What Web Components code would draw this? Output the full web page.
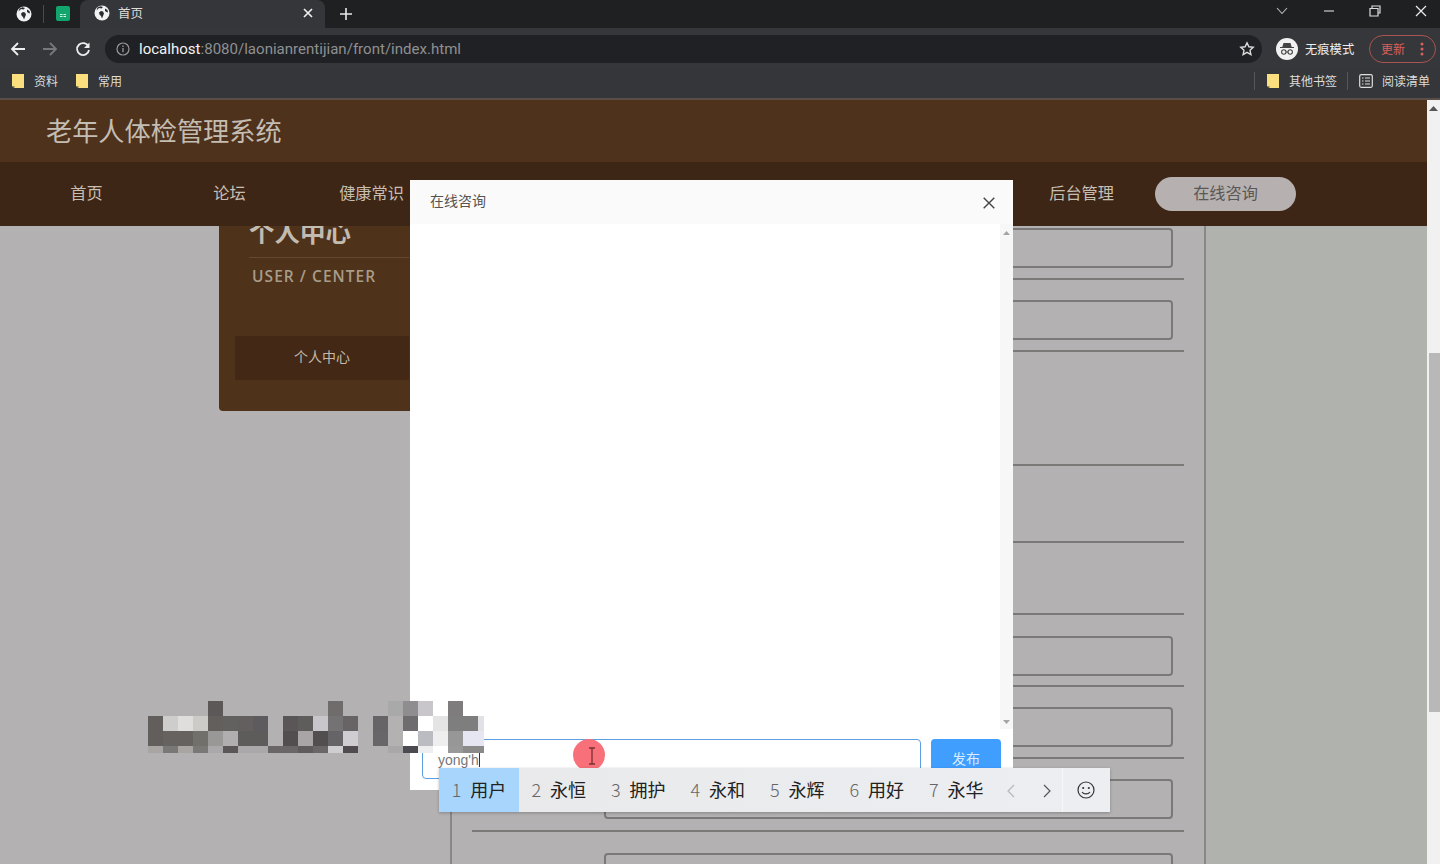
<!DOCTYPE html>
<html lang="zh">
<head>
<meta charset="utf-8">
<title>首页</title>
<style>
  html, body { margin: 0; padding: 0; height: 864px; overflow: hidden; background: #b3b0af; }
  body { font-family: "Liberation Sans", "Noto Sans CJK SC", sans-serif; position: relative; }
  #app { display: flex; height: 764px; }
  #page { width: 1427px; display: flex; flex-direction: column; }
</style>
</head>
<body>
<browser-chrome></browser-chrome>
<div id="app">
  <div id="page">
    <site-header title="老年人体检管理系统"></site-header>
    <site-nav></site-nav>
    <center-view></center-view>
  </div>
  <page-scrollbar></page-scrollbar>
</div>
<chat-dialog></chat-dialog>
<mosaic-block></mosaic-block>
<click-spot></click-spot>
<ime-bar></ime-bar>

<script>
const GLOBE = `<svg width="16" height="16" viewBox="0 0 16 16"><circle cx="8" cy="8" r="7.5" fill="#f2f2f2"/><path d="M2.5 5.5 5 3l2.5.5L9 2 6.5 1.2 3.5 2.5zM7 6l2 .5 1 2-1 2.5-1 2.5-1-2.5-1.5-1.5-.5-2zM11 3.5l2.5 1.5.5 2.5-1.5-.5-1.5-1z" fill="#2b2c2f"/></svg>`
const FOLDER = `<svg width="12" height="14" viewBox="0 0 12 14"><path d="M0 0h12v14H2.5L0 12z" fill="#fbdf7f"/><path d="M0 12h2.5v2z" fill="#8f8460"/></svg>`

class BrowserChrome extends HTMLElement {
  constructor() {
    super()
    this.attachShadow({ mode: 'open' })
  }
  connectedCallback() {
    this.shadowRoot.innerHTML = `
      <div class="strip">
        <span class="pin">${GLOBE}</span>
        <i class="sep"></i>
        <span class="pin sheet"><svg width="14" height="15" viewBox="0 0 14 15"><rect width="14" height="15" rx="2" fill="#12a56e"/><path d="M4 8h2.5v1H4zM7.5 8H10v1H7.5zM4 10h2.5v1H4zM7.5 10H10v1H7.5z" fill="#d8f5e6"/></svg></span>
        <div class="tab">
          ${GLOBE}
          <span class="tab-title">首页</span>
          <svg class="tab-x" width="10" height="10" viewBox="0 0 10 10"><path d="M1 1l8 8M9 1l-8 8" stroke="#eee" stroke-width="1.7"/></svg>
        </div>
        <svg class="plus" width="14" height="14" viewBox="0 0 14 14"><path d="M7 1v12M1 7h12" stroke="#e8e8e8" stroke-width="1.6"/></svg>
        <div class="win">
          <svg width="12" height="8" viewBox="0 0 12 8" style="margin-right:35px"><path d="M1 1l5 5.5L11 1" fill="none" stroke="#bbb" stroke-width="1.1"/></svg>
          <svg width="12" height="2" viewBox="0 0 12 2" style="margin-right:34px"><path d="M1 1h10" stroke="#ccc" stroke-width="1.2"/></svg>
          <svg width="12" height="12" viewBox="0 0 12 12" style="margin-right:34px"><path d="M3 3V1h8v7H9M1 3.5h8v7.5H1z" fill="none" stroke="#ddd" stroke-width="1.2"/></svg>
          <svg width="12" height="12" viewBox="0 0 12 12"><path d="M1 1l10 10M11 1L1 11" stroke="#eee" stroke-width="1.2"/></svg>
        </div>
      </div>
      <div class="tools">
        <svg class="ic" style="margin-left:10px" width="16" height="16" viewBox="0 0 16 16"><path d="M15 8H2M8 2 2 8l6 6" fill="none" stroke="#eee" stroke-width="1.8"/></svg>
        <svg class="ic" style="margin-left:16px" width="16" height="16" viewBox="0 0 16 16"><path d="M1 8h13M8 2l6 6-6 6" fill="none" stroke="#77787a" stroke-width="1.8"/></svg>
        <svg class="ic" style="margin-left:17px" width="16" height="16" viewBox="0 0 16 16"><path d="M13.5 5.5A6 6 0 1 0 14 9" fill="none" stroke="#eee" stroke-width="1.8"/><path d="M14.5 1.5V7H9z" fill="#eee"/></svg>
        <div class="url">
          <svg width="14" height="14" viewBox="0 0 14 14"><circle cx="7" cy="7" r="6" fill="none" stroke="#999" stroke-width="1.2"/><path d="M7 6v4.2M7 3.6v1.3" stroke="#999" stroke-width="1.3"/></svg>
          <span class="addr"><b>localhost</b>:8080/laonianrentijian/front/index.html</span>
          <svg class="star" width="16" height="16" viewBox="0 0 16 16"><path d="M8 1.8l1.9 4 4.3.5-3.2 3 .9 4.3L8 11.4l-3.9 2.2.9-4.3-3.2-3 4.3-.5z" fill="none" stroke="#ddd" stroke-width="1.4"/></svg>
        </div>
        <div class="incog">
          <svg width="22" height="22" viewBox="0 0 22 22"><circle cx="11" cy="11" r="11" fill="#f1f1f1"/><path d="M7.5 5h7l1.2 4H18v1H4V9h2.300z" fill="#444"/><circle cx="7.800" cy="14" r="2.200" fill="none" stroke="#444" stroke-width="1.100"/><circle cx="14.200" cy="14" r="2.200" fill="none" stroke="#444" stroke-width="1.100"/><path d="M10 14h2" stroke="#444"/></svg>
          <span>无痕模式</span>
        </div>
        <div class="update">
          <span>更新</span>
          <svg width="4" height="14" viewBox="0 0 4 14"><circle cx="2" cy="2" r="1.500" fill="#d9605c"/><circle cx="2" cy="7" r="1.500" fill="#d9605c"/><circle cx="2" cy="12" r="1.500" fill="#d9605c"/></svg>
        </div>
      </div>
      <div class="marks">
        ${FOLDER}<span class="mk" style="margin:0 18px 1px 10px">资料</span>
        ${FOLDER}<span class="mk" style="margin-left:10px">常用</span>
        <i class="bar" style="margin-left:auto"></i>
        <span style="margin-left:12px;display:flex">${FOLDER}</span><span class="mk" style="margin-left:10px">其他书签</span>
        <i class="bar" style="margin-left:10px"></i>
        <svg style="margin-left:11px" width="14" height="14" viewBox="0 0 14 14"><rect x=".7" y=".7" width="12.600" height="12.600" rx="1.500" fill="none" stroke="#ddd" stroke-width="1.200"/><path d="M3 4h1.500M6 4h5M3 7h1.500M6 7h5M3 10h1.500M6 10h5" stroke="#ddd" stroke-width="1.100"/></svg>
        <span class="mk" style="margin-left:9px">阅读清单</span>
      </div>
      <style>
        :host {
          display: block;
          height: 100px;
          color: #e4e4e4;
          font-family: "Noto Sans CJK SC", sans-serif;
        }
        .strip { height: 28px; background: #1f2022; display: flex; align-items: center; padding-left: 16px; }
        .pin { display: flex; margin-top: -1px; }
        .sep { width: 1px; height: 18px; background: #4a4b4d; margin: 0 12px 0 11px; }
        .sheet { margin-right: 10px; }
        .tab {
          width: 245px; height: 28px; box-sizing: border-box;
          background: #35363a; border-radius: 8px 8px 0 0;
          display: flex; align-items: center; padding: 0 0 2px 14px;
        }
        .tab-title { font-size: 12.500px; margin: 0 0 2px 8px; color: #ddd; }
        .tab-x { margin-left: auto; margin-right: 12px; }
        .plus { margin-left: 14px; margin-top: -1px; }
        .win { margin-left: auto; display: flex; align-items: center; padding-right: 13px; margin-top: -7px; }
        .tools { height: 40px; background: #36373a; display: flex; align-items: center; padding-top: 1px; box-sizing: border-box; }
        .ic { flex: none; }
        .url {
          margin-left: 14px; width: 1157px; height: 28px; box-sizing: border-box;
          background: #202124; border-radius: 14px;
          display: flex; align-items: center; padding: 0 7px 0 11px;
        }
        .addr { margin-left: 9px; font: 15.050px Roboto, sans-serif; color: #8f9092; }
        .addr b { font-weight: 400; color: #f4f4f4; }
        .star { margin-left: auto; }
        .incog {
          margin-left: 14px; height: 26px; width: 86px; display: flex; align-items: center;
          gap: 7px; font-size: 12.300px; color: #eee; white-space: nowrap;
        }
        .update {
          margin-left: 7px; width: 67px; height: 28px; box-sizing: border-box;
          border: 1.500px solid #a85450; border-radius: 14px;
          display: flex; align-items: center; padding: 0 11px 0 11px;
          justify-content: space-between; color: #d9605c; font-size: 12px;
        }
        .marks {
          height: 32px; box-sizing: border-box; background: #353639;
          display: flex; align-items: center; padding: 0 10px 5px 12px;
          border-bottom: 2px solid #5a4f48;
        }
        .mk { font-size: 12px; color: #dcdcdc; white-space: nowrap; margin-bottom: 1px; }
        .bar { width: 1px; height: 18px; background: #55565a; }
      </style>
    `
  }
}

class SiteHeader extends HTMLElement {
  constructor() {
    super()
    this.attachShadow({ mode: 'open' })
  }
  connectedCallback() {
    this.shadowRoot.innerHTML = `
      <span>${this.getAttribute('title')}</span>
      <style>
        :host {
          display: flex;
          align-items: center;
          height: 62px;
          box-sizing: border-box;
          padding: 0 0 3px 46px;
          background: #4f321c;
          color: #c4bdb3;
          font-size: 26.200px;
          font-family: "Noto Sans CJK SC", sans-serif;
        }
      </style>
    `
  }
}

class SiteNav extends HTMLElement {
  constructor() {
    super()
    this.attachShadow({ mode: 'open' })
  }
  connectedCallback() {
    this.shadowRoot.innerHTML = `
      <a>首页</a><a>论坛</a><a class="third">健康常识</a>
      <a class="end">后台管理</a>
      <a class="pill">在线咨询</a>
      <style>
        :host {
          display: flex;
          align-items: center;
          height: 64px;
          padding: 0 131px 0 15px;
          background: #3d2615;
          color: #c8bfb3;
          font-size: 16.200px;
          font-family: "Noto Sans CJK SC", sans-serif;
        }
        a { width: 143px; text-align: center; flex: none; margin-bottom: 4px; }
        .third { width: 141px; }
        .end { margin-left: auto; width: auto; margin-right: 41px; }
        .pill {
          width: 141px; height: 34px; line-height: 30px; margin-bottom: 0;
          background: #b6b1b0; border-radius: 17px; color: #5a5855;
        }
      </style>
    `
  }
}

class CenterView extends HTMLElement {
  constructor() {
    super()
    this.attachShadow({ mode: 'open' })
  }
  connectedCallback() {
    this.shadowRoot.innerHTML = `
      <user-card></user-card>
      <form-panel>
        <form-row h="54" top="2" input></form-row>
        <form-row h="72" top="20" input></form-row>
        <form-row h="114"></form-row>
        <form-row h="77"></form-row>
        <form-row h="72"></form-row>
        <form-row h="72" input></form-row>
        <form-row h="72" top="20" input></form-row>
        <form-row h="73" top="20" input></form-row>
        <form-row h="72" input></form-row>
      </form-panel>
      <style>
        :host {
          display: flex;
          align-items: flex-start;
          flex: 1;
          min-height: 0;
          overflow: hidden;
          padding-left: 219px;
          gap: 25px;
          background: linear-gradient(90deg, #b4b1b2 0, #b4b1b2 1206px, #b0b2ae 1206px);
        }
      </style>
    `
  }
}

class UserCard extends HTMLElement {
  constructor() {
    super()
    this.attachShadow({ mode: 'open' })
  }
  connectedCallback() {
    this.shadowRoot.innerHTML = `
      <div class="cn">个人中心</div>
      <div class="en">USER / CENTER</div>
      <div class="btn">个人中心</div>
      <style>
        :host {
          display: block;
          flex: none;
          width: 206px;
          height: 185px;
          box-sizing: border-box;
          padding: 0 16px;
          background: #4e3219;
          border-radius: 0 0 4px 4px;
          font-family: "Noto Sans CJK SC", sans-serif;
        }
        .cn {
          margin: -14px 0 0 14px;
          height: 45px;
          line-height: 38px;
          font-size: 25.500px;
          font-weight: 700;
          color: #c2bbb1;
          border-bottom: 1px solid #62492f;
        }
        .en {
          margin-top: 8px;
          padding-left: 17px;
          font: 600 15.500px/20px "Open Sans", "Liberation Sans", sans-serif;
          letter-spacing: 1.050px;
          white-space: nowrap;
          color: #a89c8b;
        }
        .btn {
          margin-top: 50px;
          height: 44px;
          line-height: 41px;
          text-align: center;
          background: #432815;
          color: #c2b9ac;
          font-size: 14px;
        }
      </style>
    `
  }
}

class FormPanel extends HTMLElement {
  constructor() {
    super()
    this.attachShadow({ mode: 'open' })
  }
  connectedCallback() {
    this.shadowRoot.innerHTML = `
      <slot></slot>
      <style>
        :host {
          display: block;
          flex: none;
          width: 756px;
          height: 900px;
          box-sizing: border-box;
          padding: 0 20px;
          border-left: 2px solid #8a8886;
          border-right: 2px solid #8a8886;
        }
      </style>
    `
  }
}

class FormRow extends HTMLElement {
  constructor() {
    super()
    this.attachShadow({ mode: 'open' })
  }
  connectedCallback() {
    const h = this.getAttribute('h')
    const hasInput = this.hasAttribute('input')
    const top = this.getAttribute('top') || 21
    this.shadowRoot.innerHTML = `
      ${hasInput ? '<div class="inp"></div>' : ''}
      <style>
        :host {
          display: block;
          height: ${h}px;
          box-sizing: border-box;
          padding-top: ${top}px;
          border-bottom: 2px solid #7b7977;
        }
        .inp {
          margin: 0 11px 0 132px;
          height: 40px;
          box-sizing: border-box;
          border: 2px solid #7b7977;
          border-radius: 4px;
        }
      </style>
    `
  }
}

class PageScrollbar extends HTMLElement {
  constructor() {
    super()
    this.attachShadow({ mode: 'open' })
  }
  connectedCallback() {
    this.shadowRoot.innerHTML = `
      <svg class="up" width="9" height="5" viewBox="0 0 9 5"><path d="M4.500 0 9 5H0z" fill="#555"/></svg>
      <div class="thumb"></div>
      <style>
        :host {
          display: flex;
          flex-direction: column;
          align-items: center;
          width: 13px;
          background: #f1f1f1;
        }
        .up { margin-top: 6px; }
        .thumb { margin-top: 242px; width: 11px; height: 359px; background: #b8b8b8; align-self: flex-end; }
      </style>
    `
  }
}

class ChatDialog extends HTMLElement {
  constructor() {
    super()
    this.attachShadow({ mode: 'open' })
  }
  connectedCallback() {
    this.shadowRoot.innerHTML = `
      <div class="head">
        <span>在线咨询</span>
        <svg width="12" height="12" viewBox="0 0 12 12"><path d="M.7.7l10.600 10.600M11.300.7.7 11.300" stroke="#444" stroke-width="1.400"/></svg>
      </div>
      <div class="log">
        <div class="msgs"></div>
        <div class="track">
          <svg width="7" height="4" viewBox="0 0 7 4"><path d="M3.500 0 7 4H0z" fill="#a5a5a5"/></svg>
          <svg width="7" height="4" viewBox="0 0 7 4"><path d="M3.500 4 7 0H0z" fill="#a5a5a5"/></svg>
        </div>
      </div>
      <div class="foot">
        <div class="field">yong'h<i class="caret"></i></div>
        <div class="send">发布</div>
      </div>
      <style>
        :host {
          position: absolute;
          left: 410px;
          top: 180px;
          width: 603px;
          height: 610px;
          display: flex;
          flex-direction: column;
          background: #fff;
          font-family: "Noto Sans CJK SC", sans-serif;
        }
        .head {
          height: 44px;
          flex: none;
          display: flex;
          align-items: center;
          justify-content: space-between;
          padding: 0 18px 0 20px;
          background: #fbfafa;
          color: #55534f;
          font-size: 14px;
        }
        .head span { margin-bottom: 4px; }
        .head svg { margin-top: 1px; }
        .log { height: 505px; flex: none; display: flex; }
        .msgs { flex: 1; }
        .track {
          width: 13px;
          padding: 7px 0 5px;
          box-sizing: border-box;
          display: flex;
          flex-direction: column;
          justify-content: space-between;
          align-items: center;
          background: #f7f7f7;
        }
        .foot { display: flex; gap: 10px; padding: 10px 12px 0; }
        .field {
          width: 499px;
          height: 40px;
          box-sizing: border-box;
          border: 1px solid #5ba0e0;
          border-radius: 4px;
          padding: 11px 15px 0;
          color: #777;
          font: 14px/18px "Liberation Sans", sans-serif;
        }
        .caret { display: inline-block; width: 1px; height: 14px; background: #333; vertical-align: -2px; }
        .send {
          width: 70px;
          height: 40px;
          box-sizing: border-box;
          padding-top: 9px;
          text-align: center;
          background: #409eff;
          border-radius: 4px;
          color: #d9ecff;
          font-size: 14px;
          line-height: 20px;
        }
      </style>
    `
  }
}

class MosaicBlock extends HTMLElement {
  constructor() {
    super()
    this.attachShadow({ mode: 'open' })
  }
  connectedCallback() {
    const rows = [
      ['','','','','#5c5858','','','','','','','','#706c6c','','','','#aaa9aa','#908d90','#c8c6ca','','#7e7c7c','',''],
      ['#625e5c','#cfcdcb','#e0dedc','#cdcbc8','#635f5d','#636060','#635f5f','#5d5b5d','','#5a5658','#5f5c5c','#c8c6ca','#757274','#686466','','#666466','','#6e6c6e','#ffffff','#e4e4e4','#7e7e7e','#7e7e7e','#e2e2e6'],
      ['#625e5c','#66625f','#66625f','#72706b','#9a9896','#b0aeae','#5e5c5a','#5e5c5a','','#524e50','#a9a5a7','#524e50','#666466','#cfcdd2','','#686668','','#ffffff','#bbbbc2','#eeeeee','#979797','#e6e6f2','#e6e6f2'],
      ['#a8a5a3','#7a7876','#a8a5a3','#7a7876','#aaa8a8','#5a5658','#aaa8a8','#aaa8a8','#6a6668','#6a6668','#5f5b5d','#6a6668','#cfcdd0','#4f4b4f','','','#a9a8a8','#4a4a50','#eeeeee','','#999999','#8a8a8a','#8a8a8a']
    ]
    this.shadowRoot.innerHTML = rows.flat().map(c => `<i style="background:${c || 'transparent'}"></i>`).join('') + `
      <style>
        :host {
          position: absolute;
          left: 148px;
          top: 701px;
          display: grid;
          grid-template-columns: repeat(22, 15px) 6px;
          grid-template-rows: 15px 15px 15px 7px;
        }
      </style>
    `
  }
}

class ClickSpot extends HTMLElement {
  constructor() {
    super()
    this.attachShadow({ mode: 'open' })
  }
  connectedCallback() {
    this.shadowRoot.innerHTML = `
      <svg width="10" height="18" viewBox="0 0 10 18"><path d="M2 1h6M2 17h6M5 1v16" fill="none" stroke="#7a3030" stroke-width="1.300"/></svg>
      <style>
        :host {
          position: absolute;
          left: 573px;
          top: 739px;
          width: 32px;
          height: 32px;
          border-radius: 50%;
          background: #f8717a;
          display: flex;
          align-items: center;
          justify-content: center;
        }
        svg { margin-left: 5px; margin-top: 2px; }
      </style>
    `
  }
}

class ImeBar extends HTMLElement {
  constructor() {
    super()
    this.attachShadow({ mode: 'open' })
  }
  connectedCallback() {
    const words = ['用户', '永恒', '拥护', '永和', '永辉', '用好', '永华']
    this.shadowRoot.innerHTML = `
      ${words.map((w, i) => `<span class="cand${i === 0 ? ' on' : ''}"><em>${i + 1}</em>${w}</span>`).join('')}
      <svg class="page" width="8" height="14" viewBox="0 0 8 14"><path d="M7 1 1 7l6 6" fill="none" stroke="#b5b7ba" stroke-width="1.200"/></svg>
      <svg class="page" style="margin-left:28px" width="8" height="14" viewBox="0 0 8 14"><path d="M1 1l6 6-6 6" fill="none" stroke="#555" stroke-width="1.200"/></svg>
      <i class="rule"></i>
      <svg class="face" width="18" height="18" viewBox="0 0 18 18"><circle cx="9" cy="9" r="8" fill="none" stroke="#333" stroke-width="1.200"/><circle cx="6.200" cy="7" r="1.100" fill="#333"/><circle cx="11.800" cy="7" r="1.100" fill="#333"/><path d="M5 11c1.800 2.600 6.200 2.600 8 0" fill="none" stroke="#333" stroke-width="1.200"/></svg>
      <style>
        :host {
          position: absolute;
          left: 439px;
          top: 768px;
          width: 671px;
          height: 44px;
          display: flex;
          align-items: center;
          background: linear-gradient(90deg, #e9e9ea, #eceef2);
          box-shadow: 0 1px 3px rgba(0,0,0,.25);
          font-family: "Noto Sans CJK SC", sans-serif;
          font-size: 18px;
          color: #222;
        }
        .cand {
          width: 79.500px;
          height: 44px;
          padding-bottom: 2px;
          flex: none;
          box-sizing: border-box;
          display: flex;
          align-items: center;
          justify-content: center;
          white-space: nowrap;
        }
        .cand.on { background: #a8d5fb; width: 80px; }
        em { font-style: normal; font-weight: 300; color: #666; margin-right: 9px; }
        .page { flex: none; margin-top: 1px; margin-left: 0; }
        .cand:last-of-type { margin-right: 11px; }
        .rule { width: 1px; height: 44px; background: #f8f8f8; margin-left: 11px; }
        .face { margin-left: 14px; }
      </style>
    `
  }
}

customElements.define('browser-chrome', BrowserChrome)
customElements.define('site-header', SiteHeader)
customElements.define('site-nav', SiteNav)
customElements.define('center-view', CenterView)
customElements.define('user-card', UserCard)
customElements.define('form-panel', FormPanel)
customElements.define('form-row', FormRow)
customElements.define('page-scrollbar', PageScrollbar)
customElements.define('chat-dialog', ChatDialog)
customElements.define('mosaic-block', MosaicBlock)
customElements.define('click-spot', ClickSpot)
customElements.define('ime-bar', ImeBar)
</script>
</body>
</html>
